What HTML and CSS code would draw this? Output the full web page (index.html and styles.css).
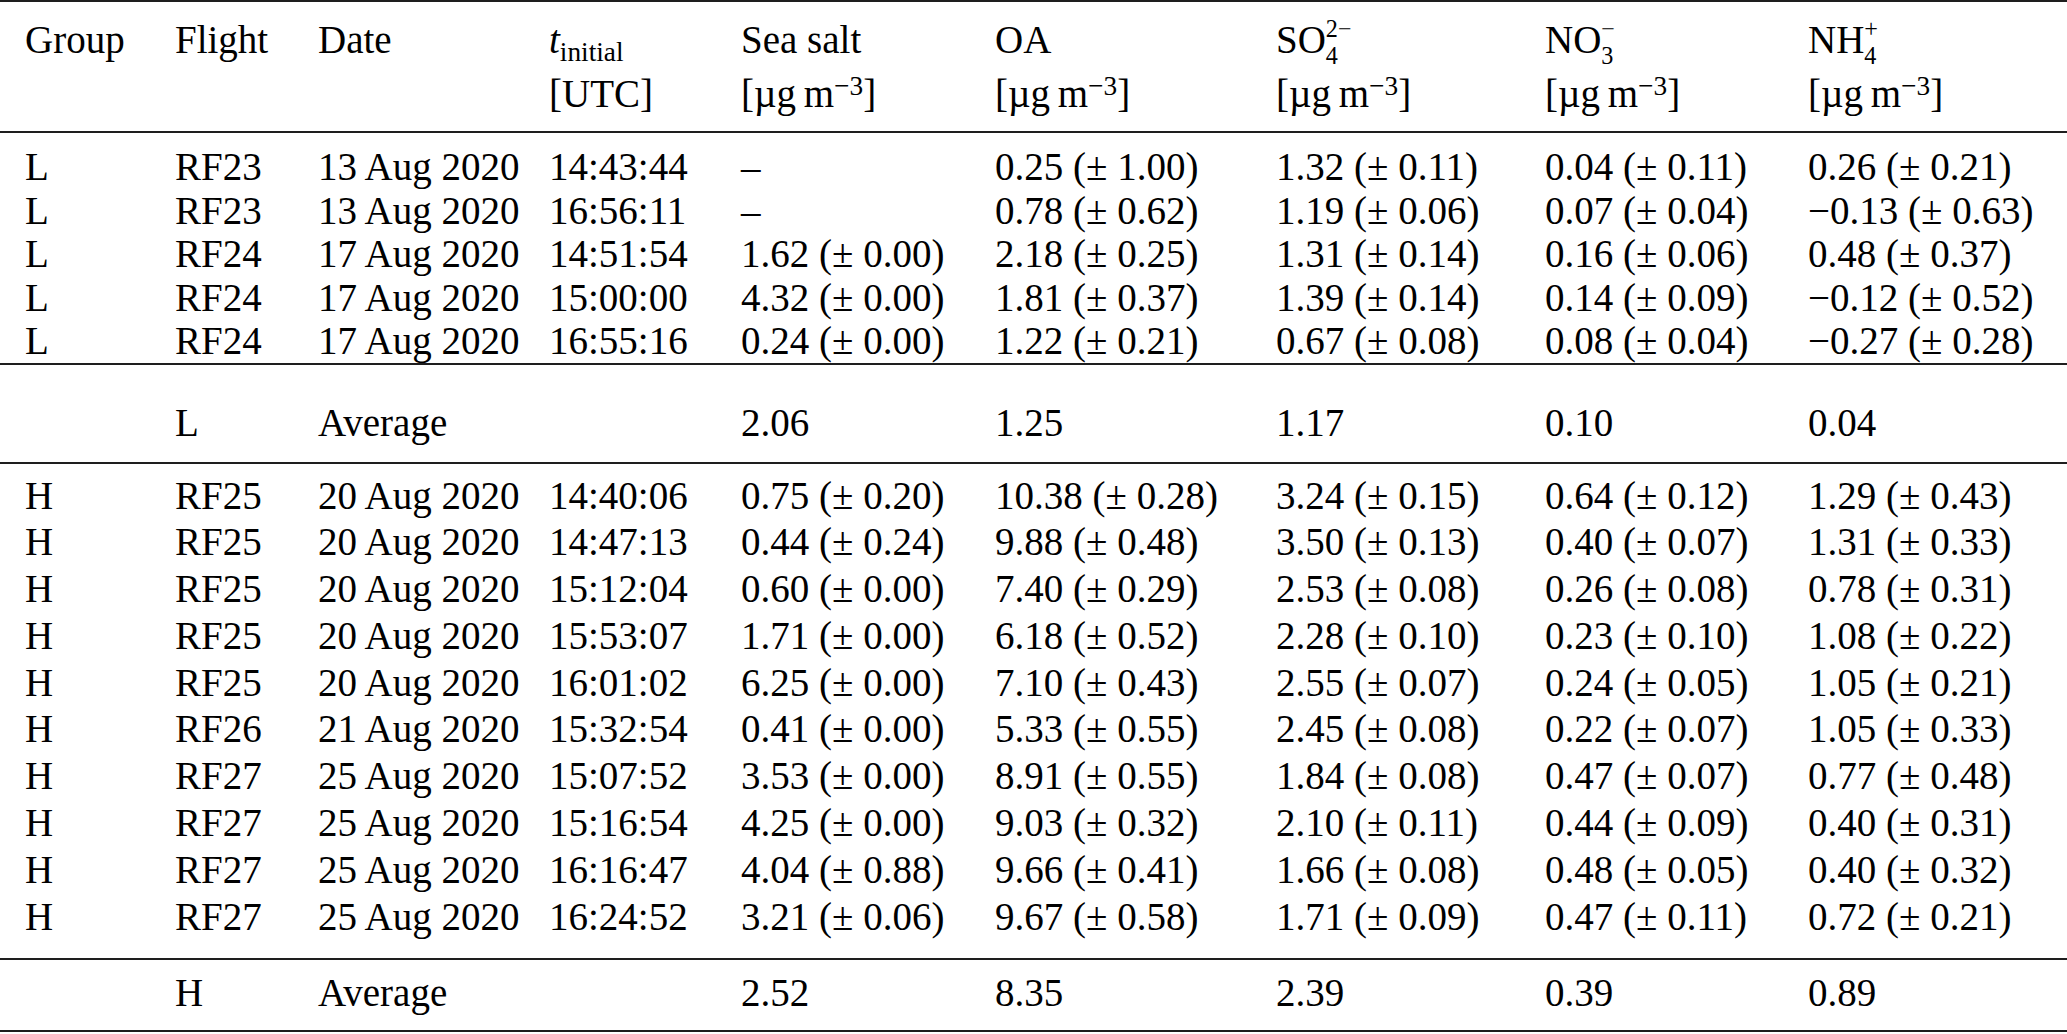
FILE: index.html
```html
<!DOCTYPE html>
<html lang="en">
<head>
<meta charset="utf-8">
<title>Aerosol composition table</title>
<link rel="stylesheet" href="styles.css">
</head>
<body>
<table class="data">
  <colgroup>
    <col class="c1"><col class="c2"><col class="c3"><col class="c4"><col class="c5"><col class="c6"><col class="c7"><col class="c8"><col class="c9">
  </colgroup>
  <thead>
    <tr>
      <th>Group</th>
      <th>Flight</th>
      <th>Date</th>
      <th><i>t</i><sub>initial</sub><br>[UTC]</th>
      <th>Sea salt<br>[µg&#8201;m<sup>−3</sup>]</th>
      <th>OA<br>[µg&#8201;m<sup>−3</sup>]</th>
      <th>SO<span class="ss"><span>2−</span><span>4</span></span><br>[µg&#8201;m<sup>−3</sup>]</th>
      <th>NO<span class="ss"><span>−</span><span>3</span></span><br>[µg&#8201;m<sup>−3</sup>]</th>
      <th>NH<span class="ss"><span>+</span><span>4</span></span><br>[µg&#8201;m<sup>−3</sup>]</th>
    </tr>
  </thead>
  <tbody class="grp-l">
    <tr><td>L</td><td>RF23</td><td>13 Aug 2020</td><td>14:43:44</td><td>–</td><td>0.25 (± 1.00)</td><td>1.32 (± 0.11)</td><td>0.04 (± 0.11)</td><td>0.26 (± 0.21)</td></tr>
    <tr><td>L</td><td>RF23</td><td>13 Aug 2020</td><td>16:56:11</td><td>–</td><td>0.78 (± 0.62)</td><td>1.19 (± 0.06)</td><td>0.07 (± 0.04)</td><td>−0.13 (± 0.63)</td></tr>
    <tr><td>L</td><td>RF24</td><td>17 Aug 2020</td><td>14:51:54</td><td>1.62 (± 0.00)</td><td>2.18 (± 0.25)</td><td>1.31 (± 0.14)</td><td>0.16 (± 0.06)</td><td>0.48 (± 0.37)</td></tr>
    <tr><td>L</td><td>RF24</td><td>17 Aug 2020</td><td>15:00:00</td><td>4.32 (± 0.00)</td><td>1.81 (± 0.37)</td><td>1.39 (± 0.14)</td><td>0.14 (± 0.09)</td><td>−0.12 (± 0.52)</td></tr>
    <tr><td>L</td><td>RF24</td><td>17 Aug 2020</td><td>16:55:16</td><td>0.24 (± 0.00)</td><td>1.22 (± 0.21)</td><td>0.67 (± 0.08)</td><td>0.08 (± 0.04)</td><td>−0.27 (± 0.28)</td></tr>
  </tbody>
  <tbody class="avg-l">
    <tr><td></td><td>L</td><td>Average</td><td></td><td>2.06</td><td>1.25</td><td>1.17</td><td>0.10</td><td>0.04</td></tr>
  </tbody>
  <tbody class="grp-h">
    <tr><td>H</td><td>RF25</td><td>20 Aug 2020</td><td>14:40:06</td><td>0.75 (± 0.20)</td><td>10.38 (± 0.28)</td><td>3.24 (± 0.15)</td><td>0.64 (± 0.12)</td><td>1.29 (± 0.43)</td></tr>
    <tr><td>H</td><td>RF25</td><td>20 Aug 2020</td><td>14:47:13</td><td>0.44 (± 0.24)</td><td>9.88 (± 0.48)</td><td>3.50 (± 0.13)</td><td>0.40 (± 0.07)</td><td>1.31 (± 0.33)</td></tr>
    <tr><td>H</td><td>RF25</td><td>20 Aug 2020</td><td>15:12:04</td><td>0.60 (± 0.00)</td><td>7.40 (± 0.29)</td><td>2.53 (± 0.08)</td><td>0.26 (± 0.08)</td><td>0.78 (± 0.31)</td></tr>
    <tr><td>H</td><td>RF25</td><td>20 Aug 2020</td><td>15:53:07</td><td>1.71 (± 0.00)</td><td>6.18 (± 0.52)</td><td>2.28 (± 0.10)</td><td>0.23 (± 0.10)</td><td>1.08 (± 0.22)</td></tr>
    <tr><td>H</td><td>RF25</td><td>20 Aug 2020</td><td>16:01:02</td><td>6.25 (± 0.00)</td><td>7.10 (± 0.43)</td><td>2.55 (± 0.07)</td><td>0.24 (± 0.05)</td><td>1.05 (± 0.21)</td></tr>
    <tr><td>H</td><td>RF26</td><td>21 Aug 2020</td><td>15:32:54</td><td>0.41 (± 0.00)</td><td>5.33 (± 0.55)</td><td>2.45 (± 0.08)</td><td>0.22 (± 0.07)</td><td>1.05 (± 0.33)</td></tr>
    <tr><td>H</td><td>RF27</td><td>25 Aug 2020</td><td>15:07:52</td><td>3.53 (± 0.00)</td><td>8.91 (± 0.55)</td><td>1.84 (± 0.08)</td><td>0.47 (± 0.07)</td><td>0.77 (± 0.48)</td></tr>
    <tr><td>H</td><td>RF27</td><td>25 Aug 2020</td><td>15:16:54</td><td>4.25 (± 0.00)</td><td>9.03 (± 0.32)</td><td>2.10 (± 0.11)</td><td>0.44 (± 0.09)</td><td>0.40 (± 0.31)</td></tr>
    <tr><td>H</td><td>RF27</td><td>25 Aug 2020</td><td>16:16:47</td><td>4.04 (± 0.88)</td><td>9.66 (± 0.41)</td><td>1.66 (± 0.08)</td><td>0.48 (± 0.05)</td><td>0.40 (± 0.32)</td></tr>
    <tr><td>H</td><td>RF27</td><td>25 Aug 2020</td><td>16:24:52</td><td>3.21 (± 0.06)</td><td>9.67 (± 0.58)</td><td>1.71 (± 0.09)</td><td>0.47 (± 0.11)</td><td>0.72 (± 0.21)</td></tr>
  </tbody>
  <tbody class="avg-h">
    <tr><td></td><td>H</td><td>Average</td><td></td><td>2.52</td><td>8.35</td><td>2.39</td><td>0.39</td><td>0.89</td></tr>
  </tbody>
</table>
</body>
</html>
```

FILE: styles.css
```css
html, body {
  margin: 0;
  padding: 0;
  background: #ffffff;
}

body {
  font-family: "Liberation Serif", "Times New Roman", serif;
  font-size: 39px;
  color: #000000;
}

.data {
  width: 2067px;
  table-layout: fixed;
  border-collapse: collapse;
  border-top: 2px solid #1e1e1e;
  border-bottom: 2px solid #1e1e1e;
}

.c1 { width: 175px; }
.c2 { width: 143px; }
.c3 { width: 231px; }
.c4 { width: 192px; }
.c5 { width: 254px; }
.c6 { width: 281px; }
.c7 { width: 269px; }
.c8 { width: 263px; }
.c9 { width: 259px; }

.data th,
.data td {
  padding: 0;
  text-align: left;
  white-space: nowrap;
}

.data th:first-child,
.data td:first-child {
  padding-left: 25px;
}

.data thead {
  border-bottom: 2px solid #1e1e1e;
}

.data th {
  font-weight: normal;
  vertical-align: top;
  line-height: 54px;
  padding-top: 11px;
  padding-bottom: 10px;
}

.data tbody {
  border-top: 2px solid #1e1e1e;
}

.data td {
  vertical-align: baseline;
}

/* low-group flights */
.grp-l td {
  line-height: 43.5px;
}
.grp-l tr:first-child td {
  padding-top: 12px;
}
.grp-l tr:last-child td {
  padding-bottom: 0;
}

/* low-group average */
.avg-l td {
  line-height: 47px;
  padding-top: 34px;
  padding-bottom: 16px;
}

/* high-group flights */
.grp-h td {
  line-height: 46.8px;
}
.grp-h tr:first-child td {
  padding-top: 9px;
}
.grp-h tr:last-child td {
  padding-bottom: 18px;
}

/* high-group average */
.avg-h td {
  line-height: 47px;
  padding-top: 9px;
  padding-bottom: 14px;
}

.data i {
  font-style: italic;
}

.data sub {
  font-size: 0.7em;
  line-height: 0;
  vertical-align: -8px;
}

.data sup {
  font-size: 0.7em;
  line-height: 0;
  vertical-align: 12px;
}

.ss {
  display: inline-block;
  font-size: 0.62em;
  line-height: 27px;
  vertical-align: -11px;
  margin-bottom: -3px;
}

.ss > span {
  display: block;
}
```
